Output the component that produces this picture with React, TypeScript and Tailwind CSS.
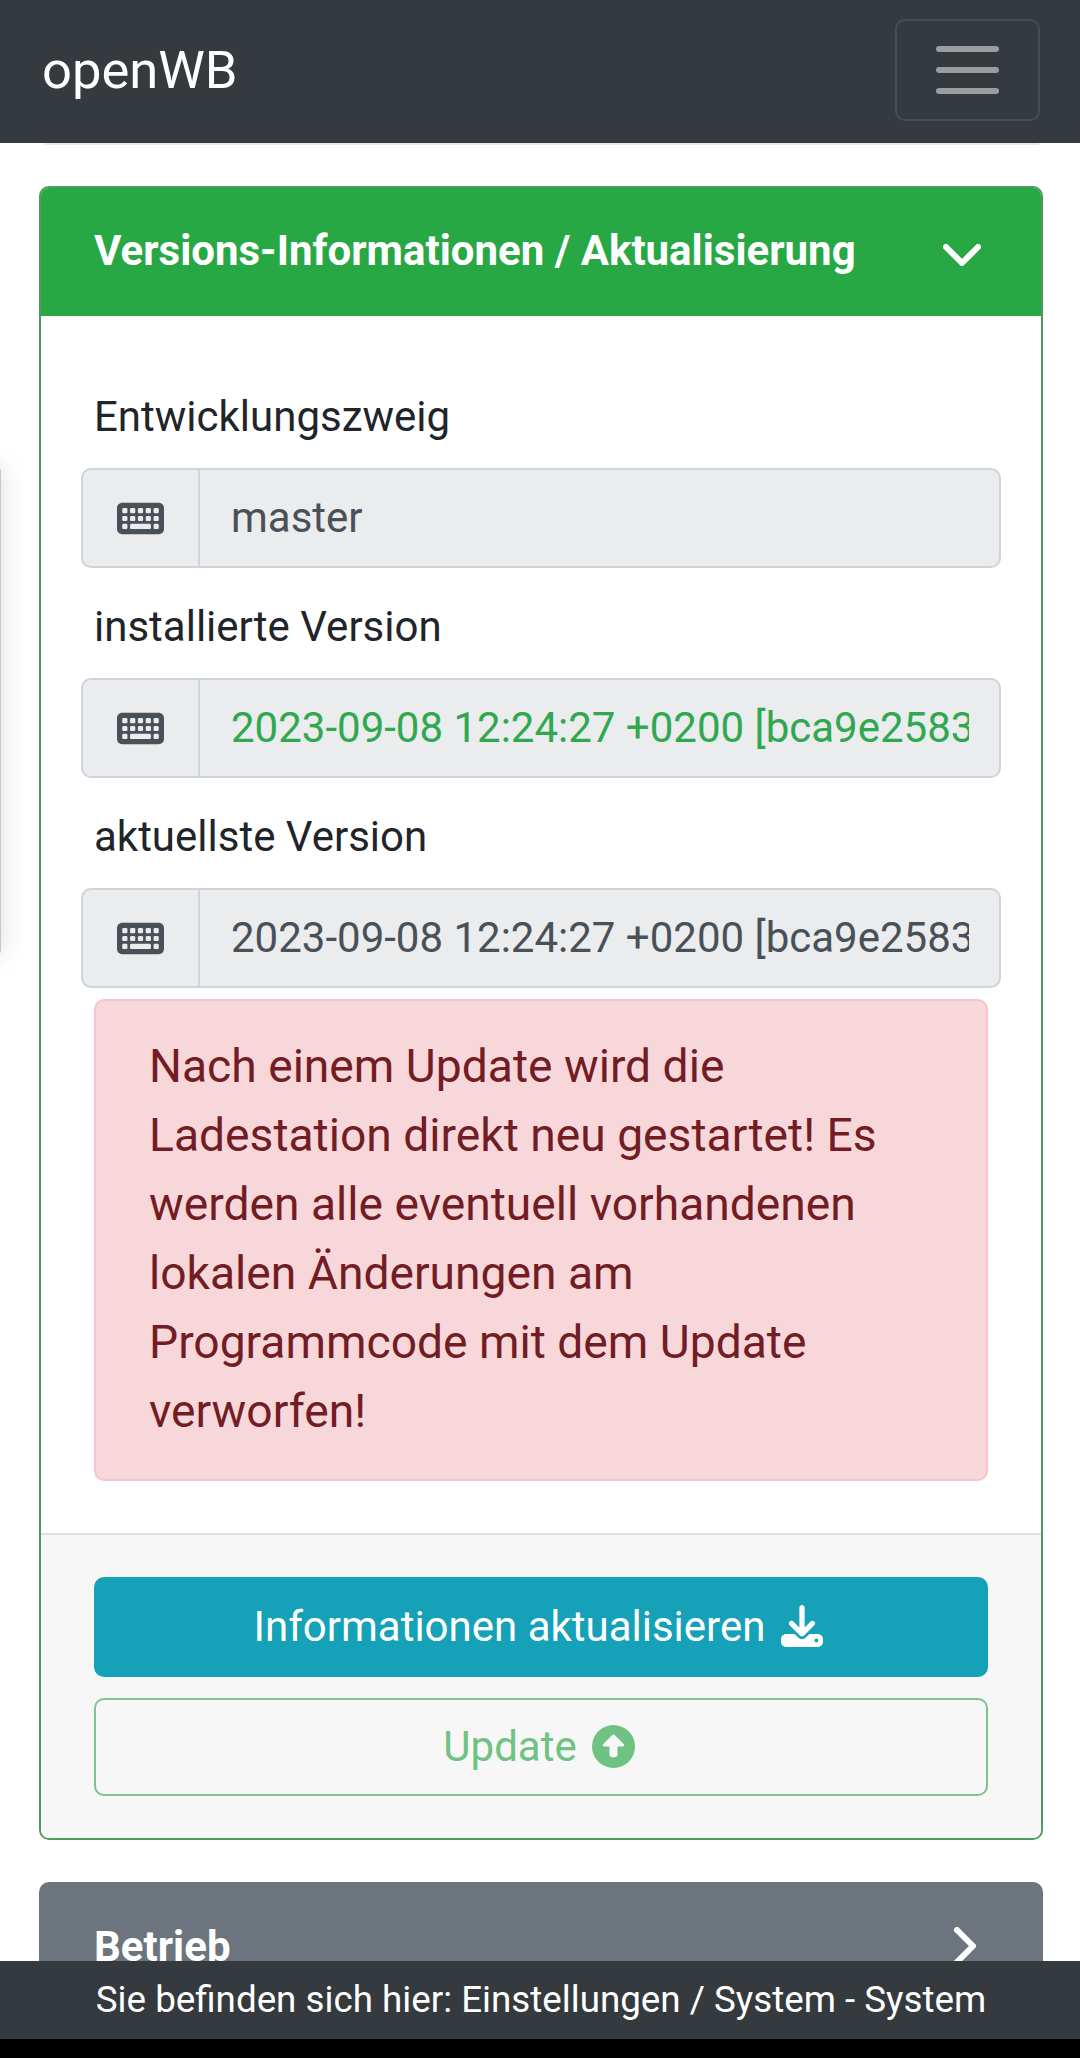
import React from "react";
import { FaKeyboard, FaCircleUp, FaDownload } from "react-icons/fa6";

const font = "font-['Roboto',sans-serif]";

const VersionField = ({
  label,
  value,
  valueClass = "text-[#495057]",
}: {
  label: string;
  value: string;
  valueClass?: string;
}) => (
  <div>
    <div className="pl-[13px] text-[42px] leading-[63px] text-[#212529] mb-[20px]">{label}</div>
    <div className="flex h-[100px] rounded-[10px] border-2 border-[#ced4da] bg-[#eaecee] overflow-hidden">
      <div className="w-[117px] shrink-0 flex items-center justify-center border-r-2 border-[#ced4da]">
        <FaKeyboard className="text-[#495057] w-[47px] h-[47px]" />
      </div>
      <div className={`flex-1 min-w-0 ml-[31px] mr-[30px] overflow-hidden whitespace-nowrap text-[42px] leading-[95px] ${valueClass}`}>
        {value}
      </div>
    </div>
  </div>
);

export default function App() {
  return (
    <div className={`${font} relative h-[2058px] w-[1080px] flex flex-col overflow-hidden bg-black`}>
      <nav className="h-[143px] shrink-0 bg-[#353a3e] flex items-center justify-between pl-[42px] pr-[40px]">
        <span className="text-[52.5px] text-white mb-[2px]">openWB</span>
        <button className="w-[145px] h-[102px] mb-[3px] rounded-[10px] border-2 border-[#484d53] flex flex-col items-center justify-center gap-[15px]">
          <span className="w-[63px] h-[6px] rounded-full bg-[#9a9da0]" />
          <span className="w-[63px] h-[6px] rounded-full bg-[#9a9da0]" />
          <span className="w-[63px] h-[6px] rounded-full bg-[#9a9da0]" />
        </button>
      </nav>

      <main className="flex-1 min-h-0 overflow-hidden bg-white pl-[39px] pr-[37px]">
        <div className="h-[2px] ml-[6px] mr-[4px] bg-[#e8e6e8]" />
        <section className="mt-[41px] rounded-[10px] border-2 border-[#4e9a5c] overflow-hidden">
          <header className="h-[128px] bg-[#28a745] flex items-center justify-between pl-[53px] pr-[60px]">
            <h2 className="text-[42px] font-bold text-white mb-[3px]">Versions-Informationen / Aktualisierung</h2>
            <svg viewBox="0 0 38 22" className="w-[38px] h-[22px] mt-[5px]" fill="none" stroke="white" strokeWidth="6" strokeLinecap="round" strokeLinejoin="round">
              <path d="M3 3 L19 19 L35 3" />
            </svg>
          </header>

          <div className="bg-white pt-[69px] px-[40px] pb-[52px]">
            <div className="flex flex-col gap-[27px]">
              <VersionField label="Entwicklungszweig" value="master" />
              <VersionField label="installierte Version" value="2023-09-08 12:24:27 +0200 [bca9e2583]" valueClass="text-[#2fa84f]" />
              <VersionField label="aktuellste Version" value="2023-09-08 12:24:27 +0200 [bca9e2583]" />
            </div>
            <div className="mt-[11px] mx-[13px] rounded-[10px] border-2 border-[#f5c6cb] bg-[#f8d7da] text-[#721c24] text-[46.2px] leading-[69px] pl-[53px] pr-[40px] pt-[31px] pb-[33px]">
              Nach einem Update wird die Ladestation direkt neu gestartet! Es werden alle eventuell vorhandenen lokalen Änderungen am Programmcode mit dem Update verworfen!
            </div>
          </div>

          <footer className="bg-[#f7f7f7] border-t-2 border-[#dfdfdf] px-[53px] pt-[42px] pb-[42px] flex flex-col gap-[21px]">
            <button className="h-[100px] pr-[5px] pb-[2px] rounded-[10px] bg-[#15a2b8] text-white text-[42px] flex items-center justify-center gap-[16px]">
              Informationen aktualisieren
              <FaDownload className="w-[42px] h-[42px]" />
            </button>
            <button className="h-[98px] pr-[4px] pb-[2px] rounded-[10px] border-2 border-[#7cc48d] text-[#6fc282] text-[42px] flex items-center justify-center gap-[15px]">
              Update
              <FaCircleUp className="w-[43px] h-[43px]" />
            </button>
          </footer>
        </section>

        <section className="mt-[42px] rounded-t-[10px] bg-[#6c757d] h-[128px] flex items-center justify-between pl-[55px] pr-[67px]">
          <h2 className="text-[42px] font-bold text-white">Betrieb</h2>
          <svg viewBox="0 0 22 38" className="w-[22px] h-[38px]" fill="none" stroke="white" strokeWidth="6" strokeLinecap="round" strokeLinejoin="round">
            <path d="M3 3 L19 19 L3 35" />
          </svg>
        </section>
      </main>

      <footer className="h-[78px] pl-[2px] shrink-0 bg-[#353a3e] text-white text-[36.75px] flex items-center justify-center">
        Sie befinden sich hier: Einstellungen / System - System
      </footer>
      <div className="h-[19px] shrink-0 bg-black" />

      {/* side drawer peeking in from the left edge */}
      <div className="absolute left-[-40px] top-[466px] w-[41px] h-[490px] rounded-r-[6px] bg-[#c8c8c8] shadow-[0_0_28px_rgba(0,0,0,0.14)]" />
    </div>
  );
}
